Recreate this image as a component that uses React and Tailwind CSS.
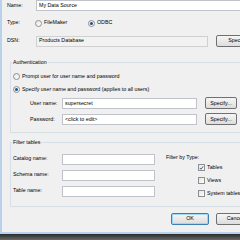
export default function App() {
  const font = { fontFamily: '"Liberation Sans", Arial, sans-serif' };

  const Radio = ({ checked }) => (
    <span className="w-[7px] h-[7px] rounded-full border border-[#8e8f8f] bg-gradient-to-br from-[#e6e6e6] to-[#ffffff] flex items-center justify-center shrink-0">
      {checked && <span className="w-[3px] h-[3px] rounded-full bg-[#1d4f86]" />}
    </span>
  );

  const Check = ({ checked }) => (
    <span className="w-[7px] h-[7px] border border-[#8e8f8f] bg-gradient-to-br from-[#e4e4e4] to-[#ffffff] flex items-center justify-center shrink-0">
      {checked && (
        <svg width="6" height="6" viewBox="0 0 6 6">
          <path d="M1 3 L2.4 4.6 L5 1" stroke="#1f3f73" strokeWidth="1" fill="none" />
        </svg>
      )}
    </span>
  );

  const Button = ({ label, w, def }) => (
    <div
      className={`h-[12px] ${w} rounded-[2px] border flex items-center justify-center bg-gradient-to-b from-[#f6f6f6] to-[#dddddd] ${
        def ? "border-[#3c7fb1] shadow-[inset_0_0_0_1px_#9fd8f5]" : "border-[#707070]"
      }`}
    >
      {label}
    </div>
  );

  const Field = ({ value, w, disabled }) => (
    <div
      className={`h-[11px] ${w} border flex items-center pl-[2px] ${
        disabled ? "bg-[#f2f2f2] border-[#d0d0d0]" : "bg-white border-[#c0c3c9]"
      }`}
    >
      {value}
    </div>
  );

  return (
    <div className="w-[240px] h-[240px] overflow-hidden flex flex-col bg-[#333]" style={font}>
      <div className="h-[234px] w-[290px] shrink-0 border-l-2 border-b-2 border-[#b9d1ea] bg-[#f0f0f0] flex flex-col text-[5.3px] leading-none text-black">
        {/* Name / Type / DSN */}
        <div className="flex items-center h-[11px] pl-[5px]">
          <span className="w-[29px]">Name:</span>
          <Field value="My Data Source" w="flex-1" />
        </div>
        <div className="flex items-center h-[12px] mt-[6px] pl-[5px]">
          <span className="w-[28px]">Type:</span>
          <Radio />
          <span className="ml-[2px] w-[44px]">FileMaker</span>
          <Radio checked />
          <span className="ml-[2px]">ODBC</span>
        </div>
        <div className="flex items-center h-[12px] mt-[6px] pl-[5px]">
          <span className="w-[29px]">DSN:</span>
          <Field value="Products Database" w="w-[172px]" disabled />
          <div className="ml-[8px]">
            <Button label="Specify..." w="w-[46px]" />
          </div>
        </div>

        {/* Authentication */}
        <fieldset className="ml-[8px] mt-[13px] border border-[#d5dfe5] pb-[7px]">
          <legend className="ml-[1px] px-[1px]">Authentication</legend>
          <div className="flex items-center h-[10px] mt-[6px] pl-[2px]">
            <Radio />
            <span className="ml-[2px]">Prompt user for user name and password</span>
          </div>
          <div className="flex items-center h-[10px] mt-[3px] pl-[2px]">
            <Radio checked />
            <span className="ml-[2px]">Specify user name and password (applies to all users)</span>
          </div>
          <div className="flex items-center h-[12px] mt-[3px] pl-[19px]">
            <span className="w-[32px]">User name:</span>
            <Field value="supersecret" w="w-[135px]" />
            <div className="ml-[8px]">
              <Button label="Specify..." w="w-[32px]" />
            </div>
          </div>
          <div className="flex items-center h-[12px] mt-[4px] pl-[19px]">
            <span className="w-[32px]">Password:</span>
            <Field value="<click to edit>" w="w-[135px]" />
            <div className="ml-[8px]">
              <Button label="Specify..." w="w-[32px]" />
            </div>
          </div>
        </fieldset>

        {/* Filter tables */}
        <fieldset className="ml-[8px] mt-[7px] border border-[#d5dfe5] pb-[8px]">
          <legend className="ml-[1px] px-[1px]">Filter tables</legend>
          <div className="flex">
            <div className="flex flex-col gap-[5px] mt-[8px] pl-[2px]">
              {["Catalog name:", "Schema name:", "Table name:"].map((l) => (
                <div key={l} className="flex items-center h-[11px]">
                  <span className="w-[49px]">{l}</span>
                  <Field value="" w="w-[93px]" />
                </div>
              ))}
            </div>
            <div className="flex flex-col ml-[11px] mt-[8px]">
              <div className="h-[8px] flex items-center">Filter by Type:</div>
              <div className="flex flex-col gap-[5px] mt-[2px] pl-[32px]">
                {[
                  ["Tables", true],
                  ["Views", false],
                  ["System tables", false],
                ].map(([l, c]) => (
                  <div key={l} className="flex items-center h-[8px]">
                    <Check checked={c} />
                    <span className="ml-[2px]">{l}</span>
                  </div>
                ))}
              </div>
            </div>
          </div>
        </fieldset>

        {/* Buttons */}
        <div className="flex gap-[7px] pl-[169px] mt-[6px]">
          <Button label="OK" w="w-[38px]" def />
          <Button label="Cancel" w="w-[38px]" />
        </div>
        <div className="flex-1" />
      </div>
      <div className="flex-1 bg-gradient-to-b from-[#2a2a2a] to-[#6a6a6a]" />
    </div>
  );
}
